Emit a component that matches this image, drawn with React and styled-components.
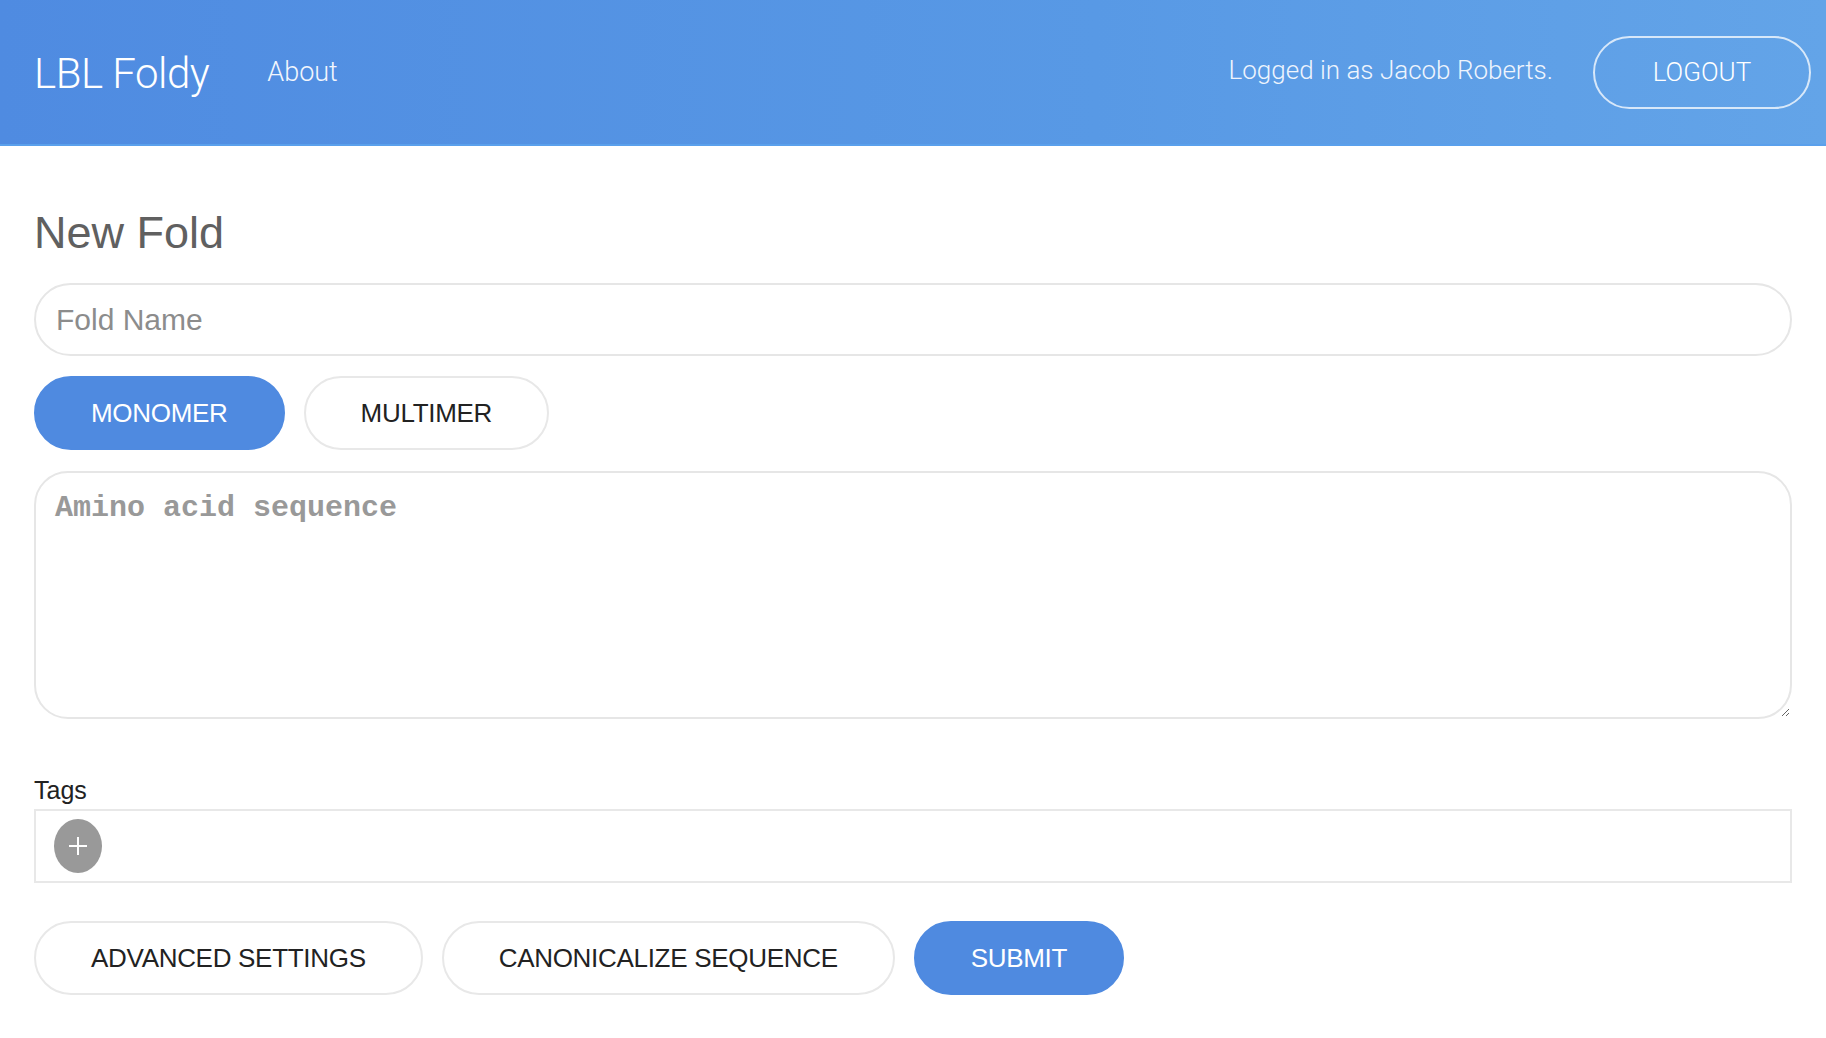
import React, { useState } from 'react';
import styled, { createGlobalStyle } from 'styled-components';

const GlobalStyle = createGlobalStyle`
  html, body {
    margin: 0;
    padding: 0;
    background: #ffffff;
    font-family: "Liberation Sans", Arial, sans-serif;
  }
  * { box-sizing: border-box; }
`;

const App = () => {
  const [mode, setMode] = useState('monomer');

  return (
    <>
      <GlobalStyle />
      <Header>
        <Brand>LBL Foldy</Brand>
        <NavLink>About</NavLink>
        <Spacer />
        <UserText>Logged in as Jacob Roberts.</UserText>
        <LogoutButton>LOGOUT</LogoutButton>
      </Header>
      <Main>
        <Heading>New Fold</Heading>
        <NameInput placeholder="Fold Name" />
        <ButtonRow>
          <PillButton primary={mode === 'monomer'} onClick={() => setMode('monomer')}>MONOMER</PillButton>
          <PillButton primary={mode === 'multimer'} onClick={() => setMode('multimer')}>MULTIMER</PillButton>
        </ButtonRow>
        <SequenceArea placeholder="Amino acid sequence" />
        <Label>Tags</Label>
        <TagBox>
          <AddTag>
            <svg width="22" height="22" viewBox="0 0 22 22">
              <path d="M11 2v18M2 11h18" stroke="#fff" strokeWidth="2" />
            </svg>
          </AddTag>
        </TagBox>
        <ButtonRow spaced>
          <PillButton>ADVANCED SETTINGS</PillButton>
          <PillButton>CANONICALIZE SEQUENCE</PillButton>
          <PillButton primary>SUBMIT</PillButton>
        </ButtonRow>
      </Main>
    </>
  );
};

const Header = styled.header`
height: 146px;
display: flex;
align-items: center;
padding: 0 15px 0 34px;
background: linear-gradient(90deg, #4f8be1 0%, #5899e5 60%, #63a4e8 100%);
border-bottom: 2px solid #5aa0ec;
font-family: Roboto, "Liberation Sans", sans-serif;
font-weight: 300;
color: #ffffff;
`;

const Brand = styled.div`
font-size: 42px;
letter-spacing: -0.5px;
margin-top: 2px;
`;

const NavLink = styled.a`
font-size: 27px;
margin-left: 58px;
color: #f2f6fd;
cursor: pointer;
`;

const Spacer = styled.div`
flex: 1;
`;

const UserText = styled.span`
font-size: 26px;
color: #eef4fd;
margin-right: 40px;
margin-top: -4px;
`;

const LogoutButton = styled.button`
width: 218px;
height: 73px;
border-radius: 37px;
border: 2px solid rgba(255, 255, 255, 0.75);
background: transparent;
color: #ffffff;
font-family: Roboto, "Liberation Sans", sans-serif;
font-weight: 300;
font-size: 26px;
cursor: pointer;
`;

const Main = styled.main`
padding: 0 34px 40px 34px;
display: flex;
flex-direction: column;
`;

const Heading = styled.h1`
margin: 64px 0 28px 0;
font-size: 45px;
font-weight: 400;
line-height: 1;
color: #606060;
`;

const NameInput = styled.input`
width: 100%;
height: 73px;
border: 2px solid #e6e6e6;
border-radius: 37px;
padding: 0 20px;
font-family: "Liberation Sans", Arial, sans-serif;
font-size: 30px;
color: #333;
outline: none;
&::placeholder { color: #8c8c8c; }
`;

const ButtonRow = styled.div`
display: flex;
gap: 19px;
margin-top: ${p => (p.spaced ? '38px' : '20px')};
`;

const PillButton = styled.button`
height: 74px;
padding: 0 55px;
border-radius: 37px;
border: 2px solid ${p => (p.primary ? '#4f8ae0' : '#e8e8e8')};
background: ${p => (p.primary ? '#4f8ae0' : '#ffffff')};
color: ${p => (p.primary ? '#ffffff' : '#222222')};
font-family: "Liberation Sans", Arial, sans-serif;
font-size: 26px;
letter-spacing: -0.3px;
cursor: pointer;
`;

const SequenceArea = styled.textarea`
margin-top: 21px;
width: 100%;
height: 248px;
border: 2px solid #e6e6e6;
border-radius: 34px;
padding: 18px 19px;
font-family: "Liberation Mono", "Courier New", monospace;
font-size: 30px;
font-weight: 700;
color: #333;
outline: none;
resize: vertical;
&::placeholder { color: #999999; }
`;

const Label = styled.label`
margin-top: 56px;
font-size: 25px;
color: #222222;
line-height: 30px;
`;

const TagBox = styled.div`
margin-top: 4px;
height: 74px;
border: 2px solid #e8e8e8;
display: flex;
align-items: center;
padding: 0 18px;
`;

const AddTag = styled.button`
width: 48px;
height: 54px;
border-radius: 50%;
border: none;
background: #999999;
display: flex;
align-items: center;
justify-content: center;
padding: 0;
cursor: pointer;
`;

export default App;
